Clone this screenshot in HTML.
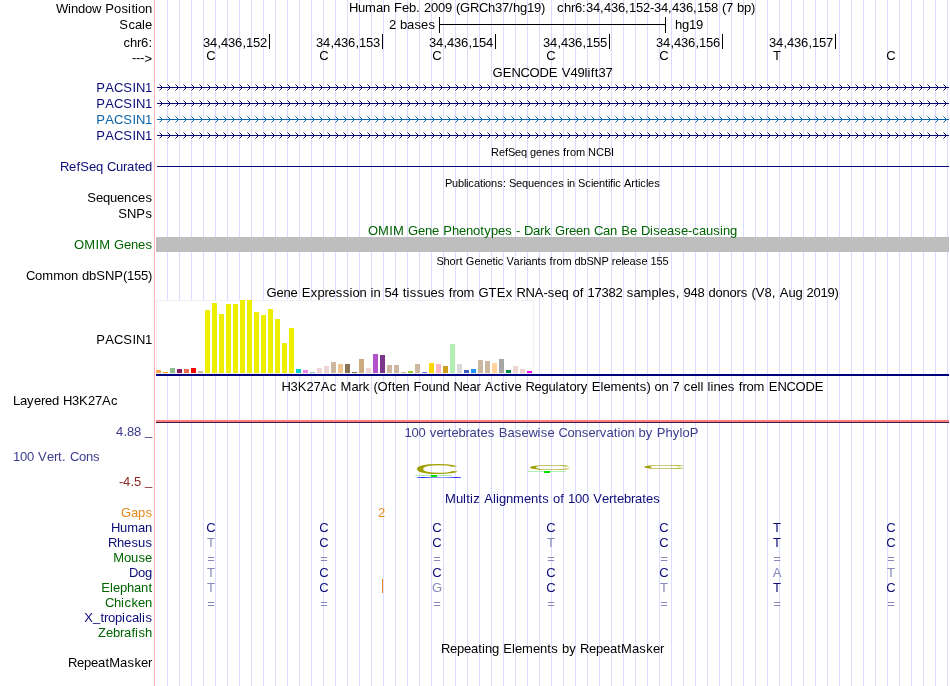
<!DOCTYPE html>
<html><head><meta charset="utf-8"><style>
html,body{margin:0;padding:0;background:#fff;}
body{width:950px;height:686px;position:relative;overflow:hidden;-webkit-font-smoothing:antialiased;font-family:"Liberation Sans",sans-serif;}
.t{position:absolute;will-change:transform;font-size:13px;line-height:15px;white-space:nowrap;}
.r{position:absolute;}
.g{position:absolute;top:0;width:1px;height:686px;background:#dcdcff;}
i{font-style:normal;display:inline-block;}
.w0{width:0px}.w1{width:1px}.w2{width:2px}.w3{width:3px}.w4{width:4px}.w5{width:5px}.w6{width:6px}.w7{width:7px}.w8{width:8px}.w9{width:9px}.w10{width:10px}.w11{width:11px}.w12{width:12px}.w13{width:13px}.w14{width:14px}.w15{width:15px}.w16{width:16px}.w17{width:17px}.w18{width:18px}.w19{width:19px}
#rl{position:absolute;left:154px;top:0;width:1px;height:686px;background:#ffb4b4;}
</style></head><body>
<div class="g" style="left:167px"></div><div class="g" style="left:179px"></div><div class="g" style="left:191px"></div><div class="g" style="left:203px"></div><div class="g" style="left:215px"></div><div class="g" style="left:227px"></div><div class="g" style="left:239px"></div><div class="g" style="left:251px"></div><div class="g" style="left:263px"></div><div class="g" style="left:275px"></div><div class="g" style="left:287px"></div><div class="g" style="left:299px"></div><div class="g" style="left:311px"></div><div class="g" style="left:323px"></div><div class="g" style="left:335px"></div><div class="g" style="left:347px"></div><div class="g" style="left:359px"></div><div class="g" style="left:371px"></div><div class="g" style="left:383px"></div><div class="g" style="left:395px"></div><div class="g" style="left:407px"></div><div class="g" style="left:419px"></div><div class="g" style="left:431px"></div><div class="g" style="left:443px"></div><div class="g" style="left:455px"></div><div class="g" style="left:467px"></div><div class="g" style="left:479px"></div><div class="g" style="left:491px"></div><div class="g" style="left:503px"></div><div class="g" style="left:515px"></div><div class="g" style="left:527px"></div><div class="g" style="left:539px"></div><div class="g" style="left:551px"></div><div class="g" style="left:563px"></div><div class="g" style="left:575px"></div><div class="g" style="left:587px"></div><div class="g" style="left:599px"></div><div class="g" style="left:611px"></div><div class="g" style="left:623px"></div><div class="g" style="left:635px"></div><div class="g" style="left:647px"></div><div class="g" style="left:659px"></div><div class="g" style="left:671px"></div><div class="g" style="left:683px"></div><div class="g" style="left:695px"></div><div class="g" style="left:707px"></div><div class="g" style="left:719px"></div><div class="g" style="left:731px"></div><div class="g" style="left:743px"></div><div class="g" style="left:755px"></div><div class="g" style="left:767px"></div><div class="g" style="left:779px"></div><div class="g" style="left:791px"></div><div class="g" style="left:803px"></div><div class="g" style="left:815px"></div><div class="g" style="left:827px"></div><div class="g" style="left:839px"></div><div class="g" style="left:851px"></div><div class="g" style="left:863px"></div><div class="g" style="left:875px"></div><div class="g" style="left:887px"></div><div class="g" style="left:899px"></div><div class="g" style="left:911px"></div><div class="g" style="left:923px"></div><div class="g" style="left:935px"></div><div class="g" style="left:947px"></div><div id="rl"></div>
<div class="r" style="left:156px;top:237px;width:793px;height:15px;background:#bebebe;"></div>
<div class="r" style="left:156px;top:300px;width:378px;height:74px;background:#fff;box-sizing:border-box;border:1px solid #f0f0f0;"></div>
<div class="r" style="left:156px;top:374px;width:793px;height:2px;background:#000080;"></div>
<div class="r" style="left:156px;top:420px;width:793px;height:2px;background:#ff7a7a;"></div>
<div class="r" style="left:156px;top:422px;width:793px;height:1px;background:#3a1848;"></div>
<div class="r" style="left:156px;top:370px;width:5px;height:3px;background:#FFA54F;"></div>
<div class="r" style="left:163px;top:372px;width:5px;height:1px;background:#EE9A00;"></div>
<div class="r" style="left:170px;top:368px;width:5px;height:5px;background:#8FBC8F;"></div>
<div class="r" style="left:177px;top:369px;width:5px;height:4px;background:#8B1C62;"></div>
<div class="r" style="left:184px;top:369px;width:5px;height:4px;background:#EE6A50;"></div>
<div class="r" style="left:191px;top:368px;width:5px;height:5px;background:#FF0000;"></div>
<div class="r" style="left:198px;top:371px;width:5px;height:2px;background:#CDB79E;"></div>
<div class="r" style="left:205px;top:310px;width:5px;height:63px;background:#EEEE00;"></div>
<div class="r" style="left:212px;top:303px;width:5px;height:70px;background:#EEEE00;"></div>
<div class="r" style="left:219px;top:314px;width:5px;height:59px;background:#EEEE00;"></div>
<div class="r" style="left:226px;top:304px;width:5px;height:69px;background:#EEEE00;"></div>
<div class="r" style="left:233px;top:304px;width:5px;height:69px;background:#EEEE00;"></div>
<div class="r" style="left:240px;top:300px;width:5px;height:73px;background:#EEEE00;"></div>
<div class="r" style="left:247px;top:300px;width:5px;height:73px;background:#EEEE00;"></div>
<div class="r" style="left:254px;top:312px;width:5px;height:61px;background:#EEEE00;"></div>
<div class="r" style="left:261px;top:315px;width:5px;height:58px;background:#EEEE00;"></div>
<div class="r" style="left:268px;top:309px;width:5px;height:64px;background:#EEEE00;"></div>
<div class="r" style="left:275px;top:319px;width:5px;height:54px;background:#EEEE00;"></div>
<div class="r" style="left:282px;top:343px;width:5px;height:30px;background:#EEEE00;"></div>
<div class="r" style="left:289px;top:328px;width:5px;height:45px;background:#EEEE00;"></div>
<div class="r" style="left:296px;top:369px;width:5px;height:4px;background:#00CDCD;"></div>
<div class="r" style="left:303px;top:370px;width:5px;height:3px;background:#EE82EE;"></div>
<div class="r" style="left:310px;top:372px;width:5px;height:1px;background:#9AC0CD;"></div>
<div class="r" style="left:317px;top:368px;width:5px;height:5px;background:#EED5D2;"></div>
<div class="r" style="left:324px;top:366px;width:5px;height:7px;background:#EED5D2;"></div>
<div class="r" style="left:331px;top:362px;width:5px;height:11px;background:#CDB79E;"></div>
<div class="r" style="left:338px;top:364px;width:5px;height:9px;background:#EEC591;"></div>
<div class="r" style="left:345px;top:364px;width:5px;height:9px;background:#8B7355;"></div>
<div class="r" style="left:352px;top:372px;width:5px;height:1px;background:#8B7355;"></div>
<div class="r" style="left:359px;top:359px;width:5px;height:14px;background:#CDAA7D;"></div>
<div class="r" style="left:366px;top:368px;width:5px;height:5px;background:#EED5D2;"></div>
<div class="r" style="left:373px;top:354px;width:5px;height:19px;background:#B452CD;"></div>
<div class="r" style="left:380px;top:355px;width:5px;height:18px;background:#7A378B;"></div>
<div class="r" style="left:387px;top:365px;width:5px;height:8px;background:#CDB79E;"></div>
<div class="r" style="left:394px;top:365px;width:5px;height:8px;background:#CDB79E;"></div>
<div class="r" style="left:401px;top:372px;width:5px;height:1px;background:#CDB79E;"></div>
<div class="r" style="left:408px;top:371px;width:5px;height:2px;background:#9ACD32;"></div>
<div class="r" style="left:415px;top:364px;width:5px;height:9px;background:#CDB79E;"></div>
<div class="r" style="left:422px;top:372px;width:5px;height:1px;background:#7777FF;"></div>
<div class="r" style="left:429px;top:363px;width:5px;height:10px;background:#FFD700;"></div>
<div class="r" style="left:436px;top:364px;width:5px;height:9px;background:#FFB6C1;"></div>
<div class="r" style="left:443px;top:366px;width:5px;height:7px;background:#CD9B1D;"></div>
<div class="r" style="left:450px;top:344px;width:5px;height:29px;background:#B4EEB4;"></div>
<div class="r" style="left:457px;top:364px;width:5px;height:9px;background:#D9D9D9;"></div>
<div class="r" style="left:464px;top:370px;width:5px;height:3px;background:#3A5FCD;"></div>
<div class="r" style="left:471px;top:369px;width:5px;height:4px;background:#1E90FF;"></div>
<div class="r" style="left:478px;top:360px;width:5px;height:13px;background:#CDB79E;"></div>
<div class="r" style="left:485px;top:361px;width:5px;height:12px;background:#CDB79E;"></div>
<div class="r" style="left:492px;top:363px;width:5px;height:10px;background:#FFD39B;"></div>
<div class="r" style="left:499px;top:359px;width:5px;height:14px;background:#A6A6A6;"></div>
<div class="r" style="left:506px;top:370px;width:5px;height:3px;background:#008B45;"></div>
<div class="r" style="left:513px;top:366px;width:5px;height:7px;background:#EED5D2;"></div>
<div class="r" style="left:520px;top:369px;width:5px;height:4px;background:#EED5D2;"></div>
<div class="r" style="left:527px;top:371px;width:5px;height:2px;background:#FF00FF;"></div>
<div class="t" style="top:1px;color:#000;right:798px;text-align:right;"><i class="w12">W</i><i class="w3">i</i><i class="w7">n</i><i class="w7">d</i><i class="w7">o</i><i class="w9">w</i><i class="w4">&nbsp;</i><i class="w9">P</i><i class="w7">o</i><i class="w7">s</i><i class="w3">i</i><i class="w4">t</i><i class="w3">i</i><i class="w7">o</i><i class="w7">n</i></div>
<div class="t" style="top:17px;color:#000;right:798px;text-align:right;"><i class="w9">S</i><i class="w7">c</i><i class="w7">a</i><i class="w3">l</i><i class="w7">e</i></div>
<div class="t" style="top:35px;color:#000;right:798px;text-align:right;"><i class="w7">c</i><i class="w7">h</i><i class="w4">r</i><i class="w7">6</i><i class="w4">:</i></div>
<div class="t" style="top:51px;color:#000;right:798px;text-align:right;"><i class="w4" style="position:relative;top:-1px">-</i><i class="w4" style="position:relative;top:-1px">-</i><i class="w4" style="position:relative;top:-1px">-</i><i class="w8">&gt;</i></div>
<div class="t" style="top:80px;color:#0c0c78;right:798px;text-align:right;"><i class="w9">P</i><i class="w9">A</i><i class="w9">C</i><i class="w9">S</i><i class="w4">I</i><i class="w9">N</i><i class="w7">1</i></div>
<div class="t" style="top:96px;color:#0c0c78;right:798px;text-align:right;"><i class="w9">P</i><i class="w9">A</i><i class="w9">C</i><i class="w9">S</i><i class="w4">I</i><i class="w9">N</i><i class="w7">1</i></div>
<div class="t" style="top:112px;color:#0c64aa;right:798px;text-align:right;"><i class="w9">P</i><i class="w9">A</i><i class="w9">C</i><i class="w9">S</i><i class="w4">I</i><i class="w9">N</i><i class="w7">1</i></div>
<div class="t" style="top:128px;color:#0c0c78;right:798px;text-align:right;"><i class="w9">P</i><i class="w9">A</i><i class="w9">C</i><i class="w9">S</i><i class="w4">I</i><i class="w9">N</i><i class="w7">1</i></div>
<div class="t" style="top:159px;color:#0c0c78;right:798px;text-align:right;"><i class="w9">R</i><i class="w7">e</i><i class="w4">f</i><i class="w9">S</i><i class="w7">e</i><i class="w7">q</i><i class="w4">&nbsp;</i><i class="w9">C</i><i class="w7">u</i><i class="w4">r</i><i class="w7">a</i><i class="w4">t</i><i class="w7">e</i><i class="w7">d</i></div>
<div class="t" style="top:190px;color:#000;right:798px;text-align:right;"><i class="w9">S</i><i class="w7">e</i><i class="w7">q</i><i class="w7">u</i><i class="w7">e</i><i class="w7">n</i><i class="w7">c</i><i class="w7">e</i><i class="w7">s</i></div>
<div class="t" style="top:206px;color:#000;right:798px;text-align:right;"><i class="w9">S</i><i class="w9">N</i><i class="w9">P</i><i class="w7">s</i></div>
<div class="t" style="top:237px;color:#006400;right:798px;text-align:right;"><i class="w10">O</i><i class="w11">M</i><i class="w4">I</i><i class="w11">M</i><i class="w4">&nbsp;</i><i class="w10">G</i><i class="w7">e</i><i class="w7">n</i><i class="w7">e</i><i class="w7">s</i></div>
<div class="t" style="top:268px;color:#000;right:798px;text-align:right;"><i class="w9">C</i><i class="w7">o</i><i class="w11">m</i><i class="w11">m</i><i class="w7">o</i><i class="w7">n</i><i class="w4">&nbsp;</i><i class="w7">d</i><i class="w7">b</i><i class="w9">S</i><i class="w9">N</i><i class="w9">P</i><i class="w4">(</i><i class="w7">1</i><i class="w7">5</i><i class="w7">5</i><i class="w4">)</i></div>
<div class="t" style="top:332px;color:#000;right:798px;text-align:right;"><i class="w9">P</i><i class="w9">A</i><i class="w9">C</i><i class="w9">S</i><i class="w4">I</i><i class="w9">N</i><i class="w7">1</i></div>
<div class="t" style="top:393px;color:#000;left:13px;"><i class="w7">L</i><i class="w7">a</i><i class="w7">y</i><i class="w7">e</i><i class="w4">r</i><i class="w7">e</i><i class="w7">d</i><i class="w4">&nbsp;</i><i class="w9">H</i><i class="w7">3</i><i class="w9">K</i><i class="w7">2</i><i class="w7">7</i><i class="w9">A</i><i class="w7">c</i></div>
<div class="t" style="top:424px;color:#3c3c8c;right:798px;text-align:right;"><i class="w7">4</i><i class="w4">.</i><i class="w7">8</i><i class="w7">8</i><i class="w4">&nbsp;</i><i class="w7" style="position:relative;top:-1px">_</i></div>
<div class="t" style="top:449px;color:#3c3c8c;left:13px;"><i class="w7">1</i><i class="w7">0</i><i class="w7">0</i><i class="w4">&nbsp;</i><i class="w9">V</i><i class="w7">e</i><i class="w4">r</i><i class="w4">t</i><i class="w4">.</i><i class="w4">&nbsp;</i><i class="w9">C</i><i class="w7">o</i><i class="w7">n</i><i class="w7">s</i></div>
<div class="t" style="top:474px;color:#8c2828;right:798px;text-align:right;"><i class="w4">-</i><i class="w7">4</i><i class="w4">.</i><i class="w7">5</i><i class="w4">&nbsp;</i><i class="w7" style="position:relative;top:-1px">_</i></div>
<div class="t" style="top:505px;color:#e4891a;right:798px;text-align:right;"><i class="w10">G</i><i class="w7">a</i><i class="w7">p</i><i class="w7">s</i></div>
<div class="t" style="top:520px;color:#0c0c78;right:798px;text-align:right;"><i class="w9">H</i><i class="w7">u</i><i class="w11">m</i><i class="w7">a</i><i class="w7">n</i></div>
<div class="t" style="top:535px;color:#0c0c78;right:798px;text-align:right;"><i class="w9">R</i><i class="w7">h</i><i class="w7">e</i><i class="w7">s</i><i class="w7">u</i><i class="w7">s</i></div>
<div class="t" style="top:550px;color:#006400;right:798px;text-align:right;"><i class="w11">M</i><i class="w7">o</i><i class="w7">u</i><i class="w7">s</i><i class="w7">e</i></div>
<div class="t" style="top:565px;color:#0c0c78;right:798px;text-align:right;"><i class="w9">D</i><i class="w7">o</i><i class="w7">g</i></div>
<div class="t" style="top:580px;color:#006400;right:798px;text-align:right;"><i class="w9">E</i><i class="w3">l</i><i class="w7">e</i><i class="w7">p</i><i class="w7">h</i><i class="w7">a</i><i class="w7">n</i><i class="w4">t</i></div>
<div class="t" style="top:595px;color:#006400;right:798px;text-align:right;"><i class="w9">C</i><i class="w7">h</i><i class="w3">i</i><i class="w7">c</i><i class="w7">k</i><i class="w7">e</i><i class="w7">n</i></div>
<div class="t" style="top:610px;color:#0c0c78;right:798px;text-align:right;"><i class="w9">X</i><i class="w7" style="position:relative;top:-1px">_</i><i class="w4">t</i><i class="w4">r</i><i class="w7">o</i><i class="w7">p</i><i class="w3">i</i><i class="w7">c</i><i class="w7">a</i><i class="w3">l</i><i class="w3">i</i><i class="w7">s</i></div>
<div class="t" style="top:625px;color:#006400;right:798px;text-align:right;"><i class="w8">Z</i><i class="w7">e</i><i class="w7">b</i><i class="w4">r</i><i class="w7">a</i><i class="w4">f</i><i class="w3">i</i><i class="w7">s</i><i class="w7">h</i></div>
<div class="t" style="top:655px;color:#000;right:798px;text-align:right;"><i class="w9">R</i><i class="w7">e</i><i class="w7">p</i><i class="w7">e</i><i class="w7">a</i><i class="w4">t</i><i class="w11">M</i><i class="w7">a</i><i class="w7">s</i><i class="w7">k</i><i class="w7">e</i><i class="w4">r</i></div>
<div class="t" style="top:0px;color:#000;left:349px;"><i class="w9">H</i><i class="w7">u</i><i class="w11">m</i><i class="w7">a</i><i class="w7">n</i><i class="w4">&nbsp;</i><i class="w8">F</i><i class="w7">e</i><i class="w7">b</i><i class="w4">.</i><i class="w4">&nbsp;</i><i class="w7">2</i><i class="w7">0</i><i class="w7">0</i><i class="w7">9</i><i class="w4">&nbsp;</i><i class="w4">(</i><i class="w10">G</i><i class="w9">R</i><i class="w9">C</i><i class="w7">h</i><i class="w7">3</i><i class="w7">7</i><i class="w4">/</i><i class="w7">h</i><i class="w7">g</i><i class="w7">1</i><i class="w7">9</i><i class="w4">)</i></div>
<div class="t" style="top:0px;color:#000;left:557px;"><i class="w7">c</i><i class="w7">h</i><i class="w4">r</i><i class="w7">6</i><i class="w4">:</i><i class="w7">3</i><i class="w7">4</i><i class="w4">,</i><i class="w7">4</i><i class="w7">3</i><i class="w7">6</i><i class="w4">,</i><i class="w7">1</i><i class="w7">5</i><i class="w7">2</i><i class="w4">-</i><i class="w7">3</i><i class="w7">4</i><i class="w4">,</i><i class="w7">4</i><i class="w7">3</i><i class="w7">6</i><i class="w4">,</i><i class="w7">1</i><i class="w7">5</i><i class="w7">8</i><i class="w4">&nbsp;</i><i class="w4">(</i><i class="w7">7</i><i class="w4">&nbsp;</i><i class="w7">b</i><i class="w7">p</i><i class="w4">)</i></div>
<div class="t" style="top:17px;color:#000;right:515px;text-align:right;"><i class="w7">2</i><i class="w4">&nbsp;</i><i class="w7">b</i><i class="w7">a</i><i class="w7">s</i><i class="w7">e</i><i class="w7">s</i></div>
<div class="r" style="left:439px;top:17px;width:1px;height:16px;background:#000;"></div>
<div class="r" style="left:439px;top:24px;width:227px;height:1px;background:#000;"></div>
<div class="r" style="left:665px;top:17px;width:1px;height:16px;background:#000;"></div>
<div class="t" style="top:17px;color:#000;left:675px;"><i class="w7">h</i><i class="w7">g</i><i class="w7">1</i><i class="w7">9</i></div>
<div class="t" style="top:35px;color:#000;right:683px;text-align:right;"><i class="w7">3</i><i class="w7">4</i><i class="w4">,</i><i class="w7">4</i><i class="w7">3</i><i class="w7">6</i><i class="w4">,</i><i class="w7">1</i><i class="w7">5</i><i class="w7">2</i></div>
<div class="r" style="left:269px;top:34px;width:1px;height:15px;background:#000;"></div>
<div class="t" style="top:35px;color:#000;right:570px;text-align:right;"><i class="w7">3</i><i class="w7">4</i><i class="w4">,</i><i class="w7">4</i><i class="w7">3</i><i class="w7">6</i><i class="w4">,</i><i class="w7">1</i><i class="w7">5</i><i class="w7">3</i></div>
<div class="r" style="left:382px;top:34px;width:1px;height:15px;background:#000;"></div>
<div class="t" style="top:35px;color:#000;right:457px;text-align:right;"><i class="w7">3</i><i class="w7">4</i><i class="w4">,</i><i class="w7">4</i><i class="w7">3</i><i class="w7">6</i><i class="w4">,</i><i class="w7">1</i><i class="w7">5</i><i class="w7">4</i></div>
<div class="r" style="left:495px;top:34px;width:1px;height:15px;background:#000;"></div>
<div class="t" style="top:35px;color:#000;right:343px;text-align:right;"><i class="w7">3</i><i class="w7">4</i><i class="w4">,</i><i class="w7">4</i><i class="w7">3</i><i class="w7">6</i><i class="w4">,</i><i class="w7">1</i><i class="w7">5</i><i class="w7">5</i></div>
<div class="r" style="left:609px;top:34px;width:1px;height:15px;background:#000;"></div>
<div class="t" style="top:35px;color:#000;right:230px;text-align:right;"><i class="w7">3</i><i class="w7">4</i><i class="w4">,</i><i class="w7">4</i><i class="w7">3</i><i class="w7">6</i><i class="w4">,</i><i class="w7">1</i><i class="w7">5</i><i class="w7">6</i></div>
<div class="r" style="left:722px;top:34px;width:1px;height:15px;background:#000;"></div>
<div class="t" style="top:35px;color:#000;right:117px;text-align:right;"><i class="w7">3</i><i class="w7">4</i><i class="w4">,</i><i class="w7">4</i><i class="w7">3</i><i class="w7">6</i><i class="w4">,</i><i class="w7">1</i><i class="w7">5</i><i class="w7">7</i></div>
<div class="r" style="left:835px;top:34px;width:1px;height:15px;background:#000;"></div>
<div class="t" style="left:190.7px;width:40px;text-align:center;top:48px">C</div>
<div class="t" style="left:303.6px;width:40px;text-align:center;top:48px">C</div>
<div class="t" style="left:416.7px;width:40px;text-align:center;top:48px">C</div>
<div class="t" style="left:530.6px;width:40px;text-align:center;top:48px">C</div>
<div class="t" style="left:643.5px;width:40px;text-align:center;top:48px">C</div>
<div class="t" style="left:757.0px;width:40px;text-align:center;top:48px">T</div>
<div class="t" style="left:870.8px;width:40px;text-align:center;top:48px">C</div>
<div class="t" style="top:65px;color:#000;left:156px;width:793px;text-align:center;"><i class="w10">G</i><i class="w9">E</i><i class="w9">N</i><i class="w9">C</i><i class="w10">O</i><i class="w9">D</i><i class="w9">E</i><i class="w4">&nbsp;</i><i class="w9">V</i><i class="w7">4</i><i class="w7">9</i><i class="w3">l</i><i class="w3">i</i><i class="w4">f</i><i class="w4">t</i><i class="w7">3</i><i class="w7">7</i></div>
<div class="t" style="top:146px;color:#000;font-size:11px;line-height:13px;left:156px;width:793px;text-align:center;"><i class="w8">R</i><i class="w6">e</i><i class="w3">f</i><i class="w7">S</i><i class="w6">e</i><i class="w6">q</i><i class="w3">&nbsp;</i><i class="w6">g</i><i class="w6">e</i><i class="w6">n</i><i class="w6">e</i><i class="w6">s</i><i class="w3">&nbsp;</i><i class="w3">f</i><i class="w4">r</i><i class="w6">o</i><i class="w9">m</i><i class="w3">&nbsp;</i><i class="w8">N</i><i class="w8">C</i><i class="w7">B</i><i class="w3">I</i></div>
<div class="t" style="top:177px;color:#000;font-size:11px;line-height:13px;left:156px;width:793px;text-align:center;"><i class="w7">P</i><i class="w6">u</i><i class="w6">b</i><i class="w2">l</i><i class="w2">i</i><i class="w6">c</i><i class="w6">a</i><i class="w3">t</i><i class="w2">i</i><i class="w6">o</i><i class="w6">n</i><i class="w6">s</i><i class="w3">:</i><i class="w3">&nbsp;</i><i class="w7">S</i><i class="w6">e</i><i class="w6">q</i><i class="w6">u</i><i class="w6">e</i><i class="w6">n</i><i class="w6">c</i><i class="w6">e</i><i class="w6">s</i><i class="w3">&nbsp;</i><i class="w2">i</i><i class="w6">n</i><i class="w3">&nbsp;</i><i class="w7">S</i><i class="w6">c</i><i class="w2">i</i><i class="w6">e</i><i class="w6">n</i><i class="w3">t</i><i class="w2">i</i><i class="w3">f</i><i class="w2">i</i><i class="w6">c</i><i class="w3">&nbsp;</i><i class="w7">A</i><i class="w4">r</i><i class="w3">t</i><i class="w2">i</i><i class="w6">c</i><i class="w2">l</i><i class="w6">e</i><i class="w6">s</i></div>
<div class="t" style="top:223px;color:#006400;left:156px;width:793px;text-align:center;"><i class="w10">O</i><i class="w11">M</i><i class="w4">I</i><i class="w11">M</i><i class="w4">&nbsp;</i><i class="w10">G</i><i class="w7">e</i><i class="w7">n</i><i class="w7">e</i><i class="w4">&nbsp;</i><i class="w9">P</i><i class="w7">h</i><i class="w7">e</i><i class="w7">n</i><i class="w7">o</i><i class="w4">t</i><i class="w7">y</i><i class="w7">p</i><i class="w7">e</i><i class="w7">s</i><i class="w4">&nbsp;</i><i class="w4">-</i><i class="w4">&nbsp;</i><i class="w9">D</i><i class="w7">a</i><i class="w4">r</i><i class="w7">k</i><i class="w4">&nbsp;</i><i class="w10">G</i><i class="w4">r</i><i class="w7">e</i><i class="w7">e</i><i class="w7">n</i><i class="w4">&nbsp;</i><i class="w9">C</i><i class="w7">a</i><i class="w7">n</i><i class="w4">&nbsp;</i><i class="w9">B</i><i class="w7">e</i><i class="w4">&nbsp;</i><i class="w9">D</i><i class="w3">i</i><i class="w7">s</i><i class="w7">e</i><i class="w7">a</i><i class="w7">s</i><i class="w7">e</i><i class="w4">-</i><i class="w7">c</i><i class="w7">a</i><i class="w7">u</i><i class="w7">s</i><i class="w3">i</i><i class="w7">n</i><i class="w7">g</i></div>
<div class="t" style="top:255px;color:#000;font-size:11px;line-height:13px;left:156px;width:793px;text-align:center;"><i class="w7">S</i><i class="w6">h</i><i class="w6">o</i><i class="w4">r</i><i class="w3">t</i><i class="w3">&nbsp;</i><i class="w9">G</i><i class="w6">e</i><i class="w6">n</i><i class="w6">e</i><i class="w3">t</i><i class="w2">i</i><i class="w6">c</i><i class="w3">&nbsp;</i><i class="w7">V</i><i class="w6">a</i><i class="w4">r</i><i class="w2">i</i><i class="w6">a</i><i class="w6">n</i><i class="w3">t</i><i class="w6">s</i><i class="w3">&nbsp;</i><i class="w3">f</i><i class="w4">r</i><i class="w6">o</i><i class="w9">m</i><i class="w3">&nbsp;</i><i class="w6">d</i><i class="w6">b</i><i class="w7">S</i><i class="w8">N</i><i class="w7">P</i><i class="w3">&nbsp;</i><i class="w4">r</i><i class="w6">e</i><i class="w2">l</i><i class="w6">e</i><i class="w6">a</i><i class="w6">s</i><i class="w6">e</i><i class="w3">&nbsp;</i><i class="w6">1</i><i class="w6">5</i><i class="w6">5</i></div>
<div class="t" style="top:285px;color:#000;left:156px;width:793px;text-align:center;"><i class="w10">G</i><i class="w7">e</i><i class="w7">n</i><i class="w7">e</i><i class="w4">&nbsp;</i><i class="w9">E</i><i class="w7">x</i><i class="w7">p</i><i class="w4">r</i><i class="w7">e</i><i class="w7">s</i><i class="w7">s</i><i class="w3">i</i><i class="w7">o</i><i class="w7">n</i><i class="w4">&nbsp;</i><i class="w3">i</i><i class="w7">n</i><i class="w4">&nbsp;</i><i class="w7">5</i><i class="w7">4</i><i class="w4">&nbsp;</i><i class="w4">t</i><i class="w3">i</i><i class="w7">s</i><i class="w7">s</i><i class="w7">u</i><i class="w7">e</i><i class="w7">s</i><i class="w4">&nbsp;</i><i class="w4">f</i><i class="w4">r</i><i class="w7">o</i><i class="w11">m</i><i class="w4">&nbsp;</i><i class="w10">G</i><i class="w8">T</i><i class="w9">E</i><i class="w7">x</i><i class="w4">&nbsp;</i><i class="w9">R</i><i class="w9">N</i><i class="w9">A</i><i class="w4">-</i><i class="w7">s</i><i class="w7">e</i><i class="w7">q</i><i class="w4">&nbsp;</i><i class="w7">o</i><i class="w4">f</i><i class="w4">&nbsp;</i><i class="w7">1</i><i class="w7">7</i><i class="w7">3</i><i class="w7">8</i><i class="w7">2</i><i class="w4">&nbsp;</i><i class="w7">s</i><i class="w7">a</i><i class="w11">m</i><i class="w7">p</i><i class="w3">l</i><i class="w7">e</i><i class="w7">s</i><i class="w4">,</i><i class="w4">&nbsp;</i><i class="w7">9</i><i class="w7">4</i><i class="w7">8</i><i class="w4">&nbsp;</i><i class="w7">d</i><i class="w7">o</i><i class="w7">n</i><i class="w7">o</i><i class="w4">r</i><i class="w7">s</i><i class="w4">&nbsp;</i><i class="w4">(</i><i class="w9">V</i><i class="w7">8</i><i class="w4">,</i><i class="w4">&nbsp;</i><i class="w9">A</i><i class="w7">u</i><i class="w7">g</i><i class="w4">&nbsp;</i><i class="w7">2</i><i class="w7">0</i><i class="w7">1</i><i class="w7">9</i><i class="w4">)</i></div>
<div class="t" style="top:379px;color:#000;left:156px;width:793px;text-align:center;"><i class="w9">H</i><i class="w7">3</i><i class="w9">K</i><i class="w7">2</i><i class="w7">7</i><i class="w9">A</i><i class="w7">c</i><i class="w4">&nbsp;</i><i class="w11">M</i><i class="w7">a</i><i class="w4">r</i><i class="w7">k</i><i class="w4">&nbsp;</i><i class="w4">(</i><i class="w10">O</i><i class="w4">f</i><i class="w4">t</i><i class="w7">e</i><i class="w7">n</i><i class="w4">&nbsp;</i><i class="w8">F</i><i class="w7">o</i><i class="w7">u</i><i class="w7">n</i><i class="w7">d</i><i class="w4">&nbsp;</i><i class="w9">N</i><i class="w7">e</i><i class="w7">a</i><i class="w4">r</i><i class="w4">&nbsp;</i><i class="w9">A</i><i class="w7">c</i><i class="w4">t</i><i class="w3">i</i><i class="w7">v</i><i class="w7">e</i><i class="w4">&nbsp;</i><i class="w9">R</i><i class="w7">e</i><i class="w7">g</i><i class="w7">u</i><i class="w3">l</i><i class="w7">a</i><i class="w4">t</i><i class="w7">o</i><i class="w4">r</i><i class="w7">y</i><i class="w4">&nbsp;</i><i class="w9">E</i><i class="w3">l</i><i class="w7">e</i><i class="w11">m</i><i class="w7">e</i><i class="w7">n</i><i class="w4">t</i><i class="w7">s</i><i class="w4">)</i><i class="w4">&nbsp;</i><i class="w7">o</i><i class="w7">n</i><i class="w4">&nbsp;</i><i class="w7">7</i><i class="w4">&nbsp;</i><i class="w7">c</i><i class="w7">e</i><i class="w3">l</i><i class="w3">l</i><i class="w4">&nbsp;</i><i class="w3">l</i><i class="w3">i</i><i class="w7">n</i><i class="w7">e</i><i class="w7">s</i><i class="w4">&nbsp;</i><i class="w4">f</i><i class="w4">r</i><i class="w7">o</i><i class="w11">m</i><i class="w4">&nbsp;</i><i class="w9">E</i><i class="w9">N</i><i class="w9">C</i><i class="w10">O</i><i class="w9">D</i><i class="w9">E</i></div>
<div class="t" style="top:425px;color:#3c3c8c;left:156px;width:793px;text-align:center;margin-left:-1px;"><i class="w7">1</i><i class="w7">0</i><i class="w7">0</i><i class="w4">&nbsp;</i><i class="w7">v</i><i class="w7">e</i><i class="w4">r</i><i class="w4">t</i><i class="w7">e</i><i class="w7">b</i><i class="w4">r</i><i class="w7">a</i><i class="w4">t</i><i class="w7">e</i><i class="w7">s</i><i class="w4">&nbsp;</i><i class="w9">B</i><i class="w7">a</i><i class="w7">s</i><i class="w7">e</i><i class="w9">w</i><i class="w3">i</i><i class="w7">s</i><i class="w7">e</i><i class="w4">&nbsp;</i><i class="w9">C</i><i class="w7">o</i><i class="w7">n</i><i class="w7">s</i><i class="w7">e</i><i class="w4">r</i><i class="w7">v</i><i class="w7">a</i><i class="w4">t</i><i class="w3">i</i><i class="w7">o</i><i class="w7">n</i><i class="w4">&nbsp;</i><i class="w7">b</i><i class="w7">y</i><i class="w4">&nbsp;</i><i class="w9">P</i><i class="w7">h</i><i class="w7">y</i><i class="w3">l</i><i class="w7">o</i><i class="w9">P</i></div>
<div class="t" style="top:491px;color:#0c0c78;left:156px;width:793px;text-align:center;"><i class="w11">M</i><i class="w7">u</i><i class="w3">l</i><i class="w4">t</i><i class="w3">i</i><i class="w7">z</i><i class="w4">&nbsp;</i><i class="w9">A</i><i class="w3">l</i><i class="w3">i</i><i class="w7">g</i><i class="w7">n</i><i class="w11">m</i><i class="w7">e</i><i class="w7">n</i><i class="w4">t</i><i class="w7">s</i><i class="w4">&nbsp;</i><i class="w7">o</i><i class="w4">f</i><i class="w4">&nbsp;</i><i class="w7">1</i><i class="w7">0</i><i class="w7">0</i><i class="w4">&nbsp;</i><i class="w9">V</i><i class="w7">e</i><i class="w4">r</i><i class="w4">t</i><i class="w7">e</i><i class="w7">b</i><i class="w4">r</i><i class="w7">a</i><i class="w4">t</i><i class="w7">e</i><i class="w7">s</i></div>
<div class="t" style="top:641px;color:#000;left:156px;width:793px;text-align:center;"><i class="w9">R</i><i class="w7">e</i><i class="w7">p</i><i class="w7">e</i><i class="w7">a</i><i class="w4">t</i><i class="w3">i</i><i class="w7">n</i><i class="w7">g</i><i class="w4">&nbsp;</i><i class="w9">E</i><i class="w3">l</i><i class="w7">e</i><i class="w11">m</i><i class="w7">e</i><i class="w7">n</i><i class="w4">t</i><i class="w7">s</i><i class="w4">&nbsp;</i><i class="w7">b</i><i class="w7">y</i><i class="w4">&nbsp;</i><i class="w9">R</i><i class="w7">e</i><i class="w7">p</i><i class="w7">e</i><i class="w7">a</i><i class="w4">t</i><i class="w11">M</i><i class="w7">a</i><i class="w7">s</i><i class="w7">k</i><i class="w7">e</i><i class="w4">r</i></div>
<div class="t" style="left:190.7px;width:40px;text-align:center;top:520px;color:#0c0c78">C</div>
<div class="t" style="left:303.6px;width:40px;text-align:center;top:520px;color:#0c0c78">C</div>
<div class="t" style="left:416.7px;width:40px;text-align:center;top:520px;color:#0c0c78">C</div>
<div class="t" style="left:530.6px;width:40px;text-align:center;top:520px;color:#0c0c78">C</div>
<div class="t" style="left:643.5px;width:40px;text-align:center;top:520px;color:#0c0c78">C</div>
<div class="t" style="left:757.0px;width:40px;text-align:center;top:520px;color:#0c0c78">T</div>
<div class="t" style="left:870.8px;width:40px;text-align:center;top:520px;color:#0c0c78">C</div>
<div class="t" style="left:190.7px;width:40px;text-align:center;top:535px;color:#8888ba">T</div>
<div class="t" style="left:303.6px;width:40px;text-align:center;top:535px;color:#0c0c78">C</div>
<div class="t" style="left:416.7px;width:40px;text-align:center;top:535px;color:#0c0c78">C</div>
<div class="t" style="left:530.6px;width:40px;text-align:center;top:535px;color:#8888ba">T</div>
<div class="t" style="left:643.5px;width:40px;text-align:center;top:535px;color:#0c0c78">C</div>
<div class="t" style="left:757.0px;width:40px;text-align:center;top:535px;color:#0c0c78">T</div>
<div class="t" style="left:870.8px;width:40px;text-align:center;top:535px;color:#0c0c78">C</div>
<div class="t" style="left:190.7px;width:40px;text-align:center;top:551px;color:#8888ba">=</div>
<div class="t" style="left:303.6px;width:40px;text-align:center;top:551px;color:#8888ba">=</div>
<div class="t" style="left:416.7px;width:40px;text-align:center;top:551px;color:#8888ba">=</div>
<div class="t" style="left:530.6px;width:40px;text-align:center;top:551px;color:#8888ba">=</div>
<div class="t" style="left:643.5px;width:40px;text-align:center;top:551px;color:#8888ba">=</div>
<div class="t" style="left:757.0px;width:40px;text-align:center;top:551px;color:#8888ba">=</div>
<div class="t" style="left:870.8px;width:40px;text-align:center;top:551px;color:#8888ba">=</div>
<div class="t" style="left:190.7px;width:40px;text-align:center;top:565px;color:#8888ba">T</div>
<div class="t" style="left:303.6px;width:40px;text-align:center;top:565px;color:#0c0c78">C</div>
<div class="t" style="left:416.7px;width:40px;text-align:center;top:565px;color:#0c0c78">C</div>
<div class="t" style="left:530.6px;width:40px;text-align:center;top:565px;color:#0c0c78">C</div>
<div class="t" style="left:643.5px;width:40px;text-align:center;top:565px;color:#0c0c78">C</div>
<div class="t" style="left:757.0px;width:40px;text-align:center;top:565px;color:#8888ba">A</div>
<div class="t" style="left:870.8px;width:40px;text-align:center;top:565px;color:#8888ba">T</div>
<div class="t" style="left:190.7px;width:40px;text-align:center;top:580px;color:#8888ba">T</div>
<div class="t" style="left:303.6px;width:40px;text-align:center;top:580px;color:#0c0c78">C</div>
<div class="t" style="left:416.7px;width:40px;text-align:center;top:580px;color:#8888ba">G</div>
<div class="t" style="left:530.6px;width:40px;text-align:center;top:580px;color:#0c0c78">C</div>
<div class="t" style="left:643.5px;width:40px;text-align:center;top:580px;color:#8888ba">T</div>
<div class="t" style="left:757.0px;width:40px;text-align:center;top:580px;color:#0c0c78">T</div>
<div class="t" style="left:870.8px;width:40px;text-align:center;top:580px;color:#0c0c78">C</div>
<div class="t" style="left:190.7px;width:40px;text-align:center;top:596px;color:#8888ba">=</div>
<div class="t" style="left:303.6px;width:40px;text-align:center;top:596px;color:#8888ba">=</div>
<div class="t" style="left:416.7px;width:40px;text-align:center;top:596px;color:#8888ba">=</div>
<div class="t" style="left:530.6px;width:40px;text-align:center;top:596px;color:#8888ba">=</div>
<div class="t" style="left:643.5px;width:40px;text-align:center;top:596px;color:#8888ba">=</div>
<div class="t" style="left:757.0px;width:40px;text-align:center;top:596px;color:#8888ba">=</div>
<div class="t" style="left:870.8px;width:40px;text-align:center;top:596px;color:#8888ba">=</div>
<div class="t" style="top:505px;color:#e4891a;left:378px;"><i class="w7">2</i></div>
<div class="r" style="left:382px;top:579px;width:1px;height:14px;background:#e4891a;"></div>
<svg class="r" style="left:0;top:0" width="950" height="686" shape-rendering="crispEdges"><pattern id="ch0" x="154" y="84" width="8" height="7" patternUnits="userSpaceOnUse"><rect x="5" y="0" width="1" height="1" fill="#0c0c78" fill-opacity="0.45"/><rect x="6" y="1" width="1" height="1" fill="#0c0c78"/><rect x="7" y="2" width="1" height="3" fill="#0c0c78"/><rect x="6" y="5" width="1" height="1" fill="#0c0c78"/><rect x="5" y="6" width="1" height="1" fill="#0c0c78" fill-opacity="0.45"/><rect x="0" y="3" width="8" height="1" fill="#0c0c78"/></pattern><rect x="157" y="84" width="792" height="7" fill="url(#ch0)"/><pattern id="ch1" x="154" y="100" width="8" height="7" patternUnits="userSpaceOnUse"><rect x="5" y="0" width="1" height="1" fill="#0c0c78" fill-opacity="0.45"/><rect x="6" y="1" width="1" height="1" fill="#0c0c78"/><rect x="7" y="2" width="1" height="3" fill="#0c0c78"/><rect x="6" y="5" width="1" height="1" fill="#0c0c78"/><rect x="5" y="6" width="1" height="1" fill="#0c0c78" fill-opacity="0.45"/><rect x="0" y="3" width="8" height="1" fill="#0c0c78"/></pattern><rect x="157" y="100" width="792" height="7" fill="url(#ch1)"/><pattern id="ch2" x="154" y="116" width="8" height="7" patternUnits="userSpaceOnUse"><rect x="5" y="0" width="1" height="1" fill="#0c64aa" fill-opacity="0.45"/><rect x="6" y="1" width="1" height="1" fill="#0c64aa"/><rect x="7" y="2" width="1" height="3" fill="#0c64aa"/><rect x="6" y="5" width="1" height="1" fill="#0c64aa"/><rect x="5" y="6" width="1" height="1" fill="#0c64aa" fill-opacity="0.45"/><rect x="0" y="3" width="8" height="1" fill="#0c64aa"/></pattern><rect x="157" y="116" width="792" height="7" fill="url(#ch2)"/><pattern id="ch3" x="154" y="132" width="8" height="7" patternUnits="userSpaceOnUse"><rect x="5" y="0" width="1" height="1" fill="#0c0c78" fill-opacity="0.45"/><rect x="6" y="1" width="1" height="1" fill="#0c0c78"/><rect x="7" y="2" width="1" height="3" fill="#0c0c78"/><rect x="6" y="5" width="1" height="1" fill="#0c0c78"/><rect x="5" y="6" width="1" height="1" fill="#0c0c78" fill-opacity="0.45"/><rect x="0" y="3" width="8" height="1" fill="#0c0c78"/></pattern><rect x="157" y="132" width="792" height="7" fill="url(#ch3)"/><rect x="157" y="166" width="792" height="1" fill="#0c0c78"/><path d="M415 475.5H452" stroke="#b0f0b0" stroke-width="1"/><rect x="431" y="475" width="6" height="2" fill="#00e000"/><defs><linearGradient id="bl" x1="417" x2="461" y1="0" y2="0" gradientUnits="userSpaceOnUse"><stop offset="0" stop-color="#7070ff"/><stop offset="0.14" stop-color="#2828ff"/><stop offset="0.35" stop-color="#9090ff"/><stop offset="0.65" stop-color="#9c9cff"/><stop offset="0.88" stop-color="#3030ff"/><stop offset="1" stop-color="#6060ff"/></linearGradient></defs><rect x="417" y="477" width="44" height="1" fill="url(#bl)"/><path d="M528 471.5H566" stroke="#b0f0b0" stroke-width="1"/><rect x="544" y="471" width="6" height="2" fill="#00e000"/><text transform="matrix(0.06440 0 0 0.01386 413.716 474.475)" font-family="Liberation Sans" font-size="1000" fill="#a0a000" shape-rendering="auto">C</text><text transform="matrix(0.06392 0 0 0.00806 526.840 470.427)" font-family="Liberation Sans" font-size="1000" fill="#a0a000" shape-rendering="auto">C</text><text transform="matrix(0.06345 0 0 0.00537 640.964 468.852)" font-family="Liberation Sans" font-size="1000" fill="#a0a000" shape-rendering="auto">C</text></svg>
</body></html>
